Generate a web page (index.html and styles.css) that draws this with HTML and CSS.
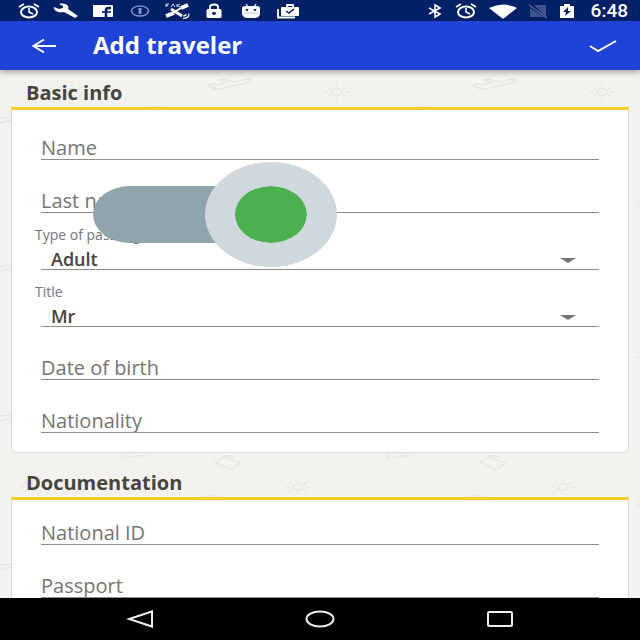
FILE: index.html
```
<!DOCTYPE html>
<html lang="en">
<head>
<meta charset="utf-8">
<meta name="viewport" content="width=device-width, initial-scale=1">
<title>Add traveler</title>
<link rel="stylesheet" href="styles.css">
</head>
<body>
<div class="status">
  <div class="status-left">
    <svg width="24" height="16" viewBox="0 0 24 16" fill="none" stroke="#fff" stroke-width="2"><ellipse cx="12" cy="9" rx="8" ry="5.5"/><path d="M12 5v4l4 2M2 4l5-3M22 4l-5-3" stroke-width="1.6"/></svg>
    <svg width="26" height="16" viewBox="0 0 26 16"><path fill="#fff" d="M1 4l5 2 4-1V3L6 1c4-1 8 0 9 2 1 1 0 2 0 3l10 7-3 2-11-6C6 10 0 8 1 4z"/></svg>
    <svg width="22" height="16" viewBox="0 0 22 16"><rect x="1" y="2" width="20" height="12" rx="1" fill="#fff"/><path d="M14 14V7q0-2 3-2h2" fill="none" stroke="#002068" stroke-width="2.600"/><path d="M10 9h9" stroke="#002068" stroke-width="1.600"/></svg>
    <svg width="20" height="16" viewBox="0 0 20 16" fill="none" stroke="#7f93d2"><ellipse cx="10" cy="8" rx="8.500" ry="5" stroke-width="1.500"/><path d="M10 5v6" stroke-width="3"/></svg>
    <svg width="28" height="18" viewBox="0 0 28 18" fill="none" stroke="#fff"><path d="M3 5V2h3M3 3.500h2M8 5l2-3 2 3M14 2v3M17 2l-3 1.500L17 5" stroke-width=".8"/><path d="M3 14l8-3M18 6l7-3" stroke-width="4"/><path d="M8 7l11 7" stroke-width="3"/><path d="M10 11l8-5" stroke-width="2"/><path d="M20 14q3 0 3-2M20 16.500q6 0 6-5" stroke-width="1.200"/></svg>
    <svg width="18" height="16" viewBox="0 0 18 16"><path fill="none" stroke="#fff" stroke-width="1.800" d="M5 7V4q0-2.500 4-2.500T13 4v3"/><rect x="1.500" y="6" width="15" height="9" rx="1.500" fill="#fff"/><ellipse cx="9" cy="10.500" rx="2" ry="1.400" fill="#002068"/></svg>
    <svg width="20" height="16" viewBox="0 0 20 16"><path d="M5 1l2 3M15 1l-2 3" stroke="#fff" stroke-width="1.300"/><path fill="#fff" d="M1 5q0-2 4-2h10q4 0 4 2v5q0 5-6 5H7q-6 0-6-5z"/><ellipse cx="6" cy="7" rx="1.400" ry="1" fill="#002068"/><ellipse cx="14" cy="7" rx="1.400" ry="1" fill="#002068"/><path d="M3 10h14" stroke="#9dabd0" stroke-width=".7"/></svg>
    <svg width="24" height="16" viewBox="0 0 24 16"><path fill="none" stroke="#fff" stroke-width="1.800" d="M2 6v8.500h17M11 4V2h6v2"/><rect x="5" y="4" width="18" height="9" rx="1" fill="#fff"/><path d="M10 8l3 2 5-4" fill="none" stroke="#002068" stroke-width="1.500"/></svg>
  </div>
  <div class="status-right">
    <svg width="16" height="16" viewBox="0 0 16 16" fill="none" stroke="#fff" stroke-width="1.600"><path d="M2 5l11 6-5 3V2l5 3-11 6"/></svg>
    <svg width="24" height="16" viewBox="0 0 24 16" fill="none" stroke="#fff" stroke-width="2"><ellipse cx="12" cy="9" rx="8" ry="5.500"/><path d="M12 5v4l4 2M2 4l5-3M22 4l-5-3" stroke-width="1.600"/></svg>
    <svg width="28" height="16" viewBox="0 0 28 16"><path fill="#fff" d="M0 5q14-7 28 0L14 16z"/></svg>
    <svg width="20" height="16" viewBox="0 0 20 16"><path d="M6 2h12v12zM2 5l14 9H2z" fill="#405488"/><path d="M1 2l18 13" stroke="#596b9b" stroke-width="1.500"/></svg>
    <svg width="16" height="16" viewBox="0 0 16 16"><path fill="#fff" d="M1 3h4V1h6v2h4v12H1z"/><path fill="#002068" d="M9 4L4 9h3l-1 4 6-5H9z"/></svg>
    <span class="clock">6:48</span>
  </div>
</div>

<header class="appbar">
  <button class="icon-btn" type="button" aria-label="Back"><svg width="26" height="16" viewBox="0 0 26 16" fill="none" stroke="#fff" stroke-width="2"><path d="M25 8H2M13 1.500L2.500 8 13 14.500"/></svg></button>
  <h1>Add traveler</h1>
  <button class="icon-btn" type="button" aria-label="Save"><svg width="28" height="14" viewBox="0 0 28 14" fill="none" stroke="#fff" stroke-width="2"><path d="M1 7l8 5L27 2"/></svg></button>
</header>

<main class="content">
  <svg class="doodles" width="100%" height="100%" aria-hidden="true" fill="none" stroke="#e5e3de" stroke-width="1.200">
    <defs>
      <g id="sun"><ellipse rx="5" ry="3.500"/><path d="M0-8v3M0 5v3M-13 0h5M8 0h5M-9-5l3 2M9-5L6-3M-9 5l3-2M9 5L6 3"/></g>
      <g id="plane"><path d="M-19 1l5-1 5 1 8-3-7-2 4-1 12 3 13-3q5 0 3 2-3 2-9 3L-6 5q-9 0-13-4z"/></g>
      <g id="bed"><path d="M-15-2l2 6M-14 2l26-3M12-5l2 6M-13-1l4-3 5 1 4-3 12 2"/></g>
      <g id="card"><path d="M-12-1L-3-6l16 6-7 6-5 0zM-3-6q6-3 10 1"/></g>
      <g id="arc"><path d="M-8 3q7-6 14 0"/></g>
      <g id="edge"><path d="M-1-2l13-1M-1 3l13-3"/></g>
    </defs>
    <use href="#plane" x="227" y="14"/><use href="#plane" x="492" y="14"/>
    <use href="#sun" x="72" y="22"/><use href="#sun" x="337" y="22"/><use href="#sun" x="602" y="22"/>
    <use href="#arc" x="157" y="36"/><use href="#arc" x="422" y="36"/>
    <use href="#bed" x="136" y="386"/><use href="#bed" x="401" y="386"/>
    <use href="#card" x="227" y="393"/><use href="#card" x="492" y="393"/>
    <use href="#sun" x="33" y="417"/><use href="#sun" x="298" y="417"/><use href="#sun" x="563" y="417"/>
    <use href="#arc" x="212" y="425"/><use href="#arc" x="477" y="425"/>
    <use href="#edge" x="0" y="50"/><use href="#edge" x="0" y="198"/><use href="#edge" x="0" y="348"/><use href="#edge" x="0" y="497"/>
    <use href="#edge" x="638" y="134"/><use href="#edge" x="638" y="284"/><use href="#edge" x="638" y="433"/>
  </svg>

  <form class="form">
    <section>
      <h2>Basic info</h2>
      <div class="card card-basic">
        <input class="field" type="text" placeholder="Name" aria-label="Name">
        <input class="field" type="text" placeholder="Last name" aria-label="Last name">
        <div class="picker">
          <label for="ptype">Type of passenger</label>
          <select id="ptype"><option>Adult</option></select>
          <svg class="caret" width="16" height="5" viewBox="0 0 16 5"><path d="M0 0h16L8 5z" fill="#737373"/></svg>
        </div>
        <div class="picker">
          <label for="title">Title</label>
          <select id="title"><option>Mr</option></select>
          <svg class="caret" width="16" height="5" viewBox="0 0 16 5"><path d="M0 0h16L8 5z" fill="#737373"/></svg>
        </div>
        <input class="field" type="text" placeholder="Date of birth" aria-label="Date of birth">
        <input class="field" type="text" placeholder="Nationality" aria-label="Nationality">
      </div>
    </section>
    <section>
      <h2>Documentation</h2>
      <div class="card">
        <input class="field" type="text" placeholder="National ID" aria-label="National ID">
        <input class="field" type="text" placeholder="Passport" aria-label="Passport">
      </div>
    </section>
  </form>

  <input class="toggle" type="checkbox" role="switch" aria-label="Toggle" checked>
</main>

<nav class="navbar">
  <button type="button" aria-label="Back"><svg width="28" height="18" viewBox="0 0 28 18" fill="none" stroke="#eee" stroke-width="2"><path d="M26 1.500v15L3 9z"/></svg></button>
  <button type="button" aria-label="Home"><svg width="30" height="18" viewBox="0 0 30 18" fill="none" stroke="#eee" stroke-width="2"><ellipse cx="15" cy="9" rx="13.500" ry="7.500"/></svg></button>
  <button type="button" aria-label="Overview"><svg width="28" height="18" viewBox="0 0 28 18" fill="none" stroke="#eee" stroke-width="2"><rect x="2" y="2" width="24" height="14" rx="1"/></svg></button>
</nav>
</body>
</html>
```
FILE: styles.css
```
*,
*::before,
*::after {
  box-sizing: border-box;
}

body {
  margin: 0;
  height: 100vh;
  display: flex;
  flex-direction: column;
  overflow: hidden;
  background: #f3f2ee;
  color: #45453c;
  font-family: "Open Sans", "Noto Sans", sans-serif;
}

svg {
  display: block;
}

button {
  display: flex;
  align-items: center;
  justify-content: center;
  padding: 0;
  border: 0;
  background: none;
}

h1,
h2 {
  margin: 0;
}

.status {
  flex: none;
  height: 21px;
  padding: 0 12px 0 10px;
  display: flex;
  align-items: center;
  justify-content: space-between;
  background: #002068;
  color: #fff;
}

.status-left {
  display: grid;
  grid-template-columns: repeat(8, 37px);
  align-items: center;
  justify-items: center;
}

.status-right {
  display: flex;
  align-items: center;
  gap: 11px;
}

.clock {
  width: 42px;
  text-align: right;
  font: 500 19px/20px Roboto, sans-serif;
}

.appbar {
  flex: none;
  position: relative;
  z-index: 1;
  height: 49px;
  padding: 0 23px 0 31px;
  display: flex;
  align-items: center;
  background: #1e43d6;
  color: #fff;
  box-shadow: 0 2px 6px rgba(0, 0, 0, 0.35);
}

.appbar h1 {
  flex: 1;
  padding: 0 0 2px 36px;
  font-size: 24px;
  line-height: 28px;
  font-weight: 700;
}

.content {
  flex: 1;
  min-height: 0;
  position: relative;
  overflow: hidden;
}

.doodles {
  position: absolute;
  inset: 0;
}

.form {
  position: relative;
  padding: 0 11px;
  display: flex;
  flex-direction: column;
  gap: 7px;
}

.form h2 {
  height: 37px;
  padding: 9px 15px 0;
  font-size: 20px;
  line-height: 28px;
  font-weight: 700;
}

.card {
  display: flex;
  flex-direction: column;
  gap: 8px;
  padding: 0 29px 19px;
  background: #fff;
  border: 1px solid #dcdbd8;
  border-top: 3px solid #f5cd24;
  border-radius: 0 0 6px 6px;
}

.card-basic {
  padding-top: 5px;
}

.field,
.picker {
  width: 100%;
  border: 0;
  border-bottom: 1px solid #8c8c8c;
  background: none;
}

.field {
  height: 45px;
  padding: 21px 0 0;
  border-radius: 0;
  font: 20px/23px "Open Sans", sans-serif;
}

.field::placeholder {
  color: #757575;
  opacity: 1;
}

.picker {
  position: relative;
  height: 49px;
}

.picker label {
  display: block;
  margin: 5px 0 0 -6px;
  font-size: 14px;
  line-height: 18px;
  color: #757575;
}

.picker select {
  display: block;
  width: 100%;
  height: 24px;
  margin-top: 3px;
  padding: 0 10px;
  border: 0;
  appearance: none;
  background: none;
  color: #45453c;
  font: 600 18px/20px "Open Sans", sans-serif;
}

.caret {
  position: absolute;
  right: 23px;
  bottom: 6px;
  pointer-events: none;
}

.toggle {
  position: absolute;
  left: 93px;
  top: 116px;
  width: 244px;
  height: 57px;
  margin: 0;
  appearance: none;
}

.toggle::before {
  content: "";
  position: absolute;
  inset: 0 66px 0 0;
  border-radius: 38px / 29px;
  background: #90a4ad;
}

.toggle::after {
  content: "";
  position: absolute;
  right: 0;
  top: -24px;
  width: 132px;
  height: 105px;
  border: solid #cfd8dc;
  border-width: 24px 30px;
  border-radius: 50%;
  background: #4caf50;
  background-clip: padding-box;
}

.navbar {
  flex: none;
  height: 42px;
  display: flex;
  align-items: center;
  justify-content: center;
  gap: 120px;
  background: #000;
}

.navbar button {
  width: 60px;
  height: 42px;
}
```
